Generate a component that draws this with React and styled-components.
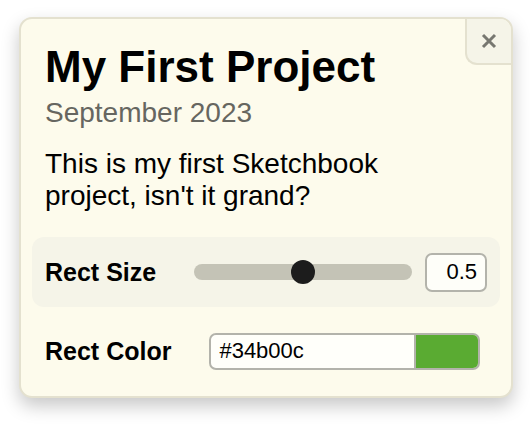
import React, { useState } from 'react';
import styled, { createGlobalStyle } from 'styled-components';

const GlobalStyle = createGlobalStyle`
	html, body{margin: 0; padding: 0; background: #ffffff; min-height: 100%}
	body{font-family: "Liberation Sans", Arial, Helvetica, sans-serif; color: #000}
	*{box-sizing: border-box}
`;

const Page = styled.div`
	min-height: 430px;
	padding: 17px 0 0 19px;
`;

const Card = styled.div`
	position: relative;
	width: 494px;
	height: 381px;
	background: #fdfbec;
	border: 2px solid #e4e1cf;
	border-radius: 13px;
	padding: 11px;
	box-shadow: 0 8px 18px rgba(0, 0, 0, 0.22);
	overflow: hidden;
	display: flex;
	flex-direction: column;
	gap: 12px;
`;

const CloseBtn = styled.button`
	position: absolute;
	top: 0;
	right: 0;
	width: 46px;
	height: 46px;
	padding: 0;
	background: #f5f4e8;
	border: none;
	border-left: 2px solid #e4e1cf;
	border-bottom: 2px solid #e4e1cf;
	border-bottom-left-radius: 12px;
	display: flex;
	align-items: center;
	justify-content: center;
	cursor: pointer;
`;

const Header = styled.div`
	padding: 11px 60px 13px 13px;
`;

const Title = styled.h1`
	margin: 0;
	font-size: 44px;
	line-height: 52px;
	font-weight: 700;
	white-space: nowrap;
`;

const Subtitle = styled.div`
	margin-top: 4px;
	font-size: 28px;
	line-height: 32px;
	color: #666660;
`;

const Description = styled.p`
	margin: 19px 0 0;
	font-size: 28px;
	line-height: 32px;
`;

const Rows = styled.div`
	display: flex;
	flex-direction: column;
	gap: 9px;
`;

const Row = styled.div`
	height: 70px;
	padding: 0 13px;
	display: flex;
	align-items: center;
	border-radius: 12px;
	background: ${p => (p.$shaded ? '#f5f4e8' : 'transparent')};
`;

const Label = styled.label`
	font-size: 25px;
	font-weight: 700;
	margin-right: 38px;
	white-space: nowrap;
`;

const Range = styled.input`
	flex: 1;
	margin: 0 13px 0 0;
	height: 24px;
	background: transparent;
	-webkit-appearance: none;
	appearance: none;

	&::-webkit-slider-runnable-track{
		height: 16px;
		border-radius: 8px;
		background: #c4c3b6;
	}
	&::-webkit-slider-thumb{
		-webkit-appearance: none;
		width: 24px;
		height: 24px;
		margin-top: -4px;
		border-radius: 50%;
		background: #1c1c1c;
		border: none;
	}
`;

const NumberBox = styled.input`
	width: 62px;
	height: 39px;
	border: 2px solid #b3b3ab;
	border-radius: 7px;
	background: #fefef9;
	font-family: inherit;
	font-size: 22px;
	text-align: right;
	padding: 0 8px 0 4px;
	color: #000;
`;

const ColorField = styled.div`
	width: 271px;
	height: 37px;
	display: flex;
	border: 2px solid #b3b3ab;
	border-radius: 7px;
	overflow: hidden;
	background: #fffffa;
`;

const HexText = styled.input`
	flex: 1;
	min-width: 0;
	border: none;
	background: transparent;
	font-family: inherit;
	font-size: 22px;
	padding: 0 8px;
	color: #000;
`;

const Swatch = styled.div`
	width: 64px;
	border-left: 2px solid #b3b3ab;
	background: ${p => p.$color};
`;

export default function App() {
	const [size, setSize] = useState(0.5);
	const [hex, setHex] = useState('#34b00c');

	return (
		<Page>
			<GlobalStyle />
			<Card>
				<CloseBtn aria-label="Close">
					<svg width="16" height="16" viewBox="0 0 16 16">
						<path d="M2 2L14 14M14 2L2 14" stroke="#777770" strokeWidth="3" />
					</svg>
				</CloseBtn>
				<Header>
					<Title>My First Project</Title>
					<Subtitle>September 2023</Subtitle>
					<Description>This is my first Sketchbook project, isn't it grand?</Description>
				</Header>
				<Rows>
					<Row $shaded>
						<Label>Rect Size</Label>
						<Range type="range" min="0" max="1" step="0.1" value={size} onChange={e => setSize(e.target.value)} />
						<NumberBox type="text" value={size} onChange={e => setSize(e.target.value)} />
					</Row>
					<Row>
						<Label>Rect Color</Label>
						<ColorField>
							<HexText type="text" value={hex} onChange={e => setHex(e.target.value)} />
							<Swatch $color="#5aab32" />
						</ColorField>
					</Row>
				</Rows>
			</Card>
		</Page>
	);
}
